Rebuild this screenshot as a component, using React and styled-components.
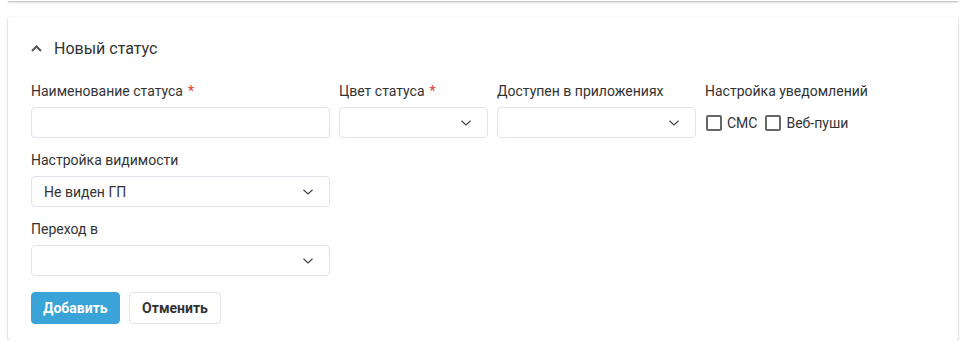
import React from "react";
import styled, { createGlobalStyle } from "styled-components";

const Global = createGlobalStyle`
  html, body { margin: 0; padding: 0; background: #fff; }
  body { font-family: Roboto, "Noto Sans", Arial, sans-serif; color: #333; }
  * { box-sizing: border-box; }
`;

const Page = styled.div`
  padding: 0 8px;
`;

const PrevCard = styled.div`
  height: 1px;
  background: #fff;
  box-shadow: 0 1px 2px rgba(0, 0, 0, 0.45);
`;

const Card = styled.section`
  margin-top: 16px;
  background: #fff;
  border-radius: 2px;
  box-shadow: 0 1px 2px rgba(0, 0, 0, 0.35), 0 0 1px rgba(0, 0, 0, 0.08);
  padding: 20px 23px 16px 23px;
`;

const Header = styled.div`
  display: flex;
  align-items: center;
  gap: 12px;
  height: 22px;
  font-size: 16px;
  color: #333;
  margin-bottom: 22px;
`;

const Grid = styled.div`
  display: grid;
  grid-template-columns: 299px 149px 199px auto;
  column-gap: 9px;
  row-gap: 12px;
  align-items: start;
`;

const Field = styled.div`
  display: flex;
  flex-direction: column;
  grid-column: ${(p) => p.$col || "auto"};
`;

const Label = styled.div`
  font-size: 14px;
  line-height: 20px;
  height: 20px;
  margin-bottom: 6px;
  color: #333;
  white-space: nowrap;
`;

const Req = styled.span`
  color: #e53935;
  margin-left: 5px;
`;

const Input = styled.div`
  height: 31px;
  border: 1px solid #dfe3ea;
  border-radius: 4px;
  background: #fff;
  display: flex;
  align-items: center;
  justify-content: space-between;
  padding: 0 16px 0 12px;
  font-size: 14px;
  color: #333;
`;

const Checks = styled.div`
  display: flex;
  align-items: center;
  height: 31px;
  gap: 8px;
  padding-left: 1px;
`;

const CheckLabel = styled.label`
  display: flex;
  align-items: center;
  gap: 5px;
  font-size: 14px;
  color: #333;
`;

const Box = styled.span`
  width: 16px;
  height: 16px;
  border: 2px solid #666;
  border-radius: 2px;
  display: inline-block;
`;

const Buttons = styled.div`
  display: flex;
  gap: 9px;
  margin-top: 16px;
`;

const Button = styled.button`
  height: 32px;
  padding: 0 ${(p) => (p.$primary ? "11px" : "12.5px")};
  border-radius: 4px;
  font-family: inherit;
  font-size: 14px;
  font-weight: 700;
  cursor: pointer;
  border: 1px solid ${(p) => (p.$primary ? "#3aa3d8" : "#dfe3ea")};
  background: ${(p) => (p.$primary ? "#3aa3d8" : "#fff")};
  color: ${(p) => (p.$primary ? "#fff" : "#333")};
`;

const Chevron = ({ up }) =>
  up ? (
    <svg width="11" height="7" viewBox="0 0 11 7" fill="none">
      <path d="M1 6 L5.5 1.5 L10 6" stroke="#555" strokeWidth="2" />
    </svg>
  ) : (
    <svg width="10" height="6" viewBox="0 0 10 6" fill="none">
      <path d="M0.5 0.8 L5 5 L9.5 0.8" stroke="#444" strokeWidth="1.2" />
    </svg>
  );

const Select = ({ value }) => (
  <Input>
    <span>{value || ""}</span>
    <Chevron />
  </Input>
);

export default function App() {
  return (
    <Page>
      <Global />
      <PrevCard />
      <Card>
        <Header>
          <Chevron up />
          <span>Новый статус</span>
        </Header>
        <Grid>
          <Field>
            <Label>
              Наименование статуса<Req>*</Req>
            </Label>
            <Input />
          </Field>
          <Field>
            <Label>
              Цвет статуса<Req>*</Req>
            </Label>
            <Select />
          </Field>
          <Field>
            <Label>Доступен в приложениях</Label>
            <Select />
          </Field>
          <Field>
            <Label>Настройка уведомлений</Label>
            <Checks>
              <CheckLabel>
                <Box />
                СМС
              </CheckLabel>
              <CheckLabel>
                <Box />
                Веб-пуши
              </CheckLabel>
            </Checks>
          </Field>
          <Field $col="1 / 2">
            <Label>Настройка видимости</Label>
            <Select value="Не виден ГП" />
          </Field>
          <Field $col="1 / 2">
            <Label>Переход в</Label>
            <Select />
          </Field>
        </Grid>
        <Buttons>
          <Button $primary>Добавить</Button>
          <Button>Отменить</Button>
        </Buttons>
      </Card>
    </Page>
  );
}
